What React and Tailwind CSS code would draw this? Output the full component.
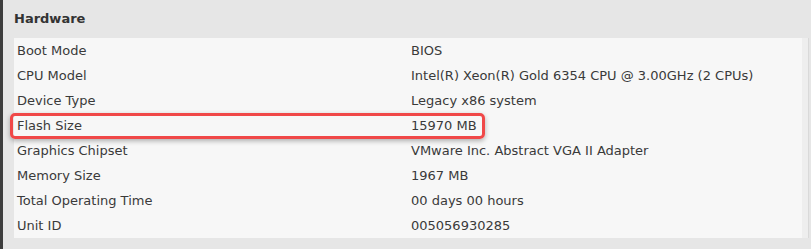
import React from 'react';

const rows = [
  ['Boot Mode', 'BIOS'],
  ['CPU Model', 'Intel(R) Xeon(R) Gold 6354 CPU @ 3.00GHz (2 CPUs)'],
  ['Device Type', 'Legacy x86 system'],
  ['Flash Size', '15970 MB'],
  ['Graphics Chipset', 'VMware Inc. Abstract VGA II Adapter'],
  ['Memory Size', '1967 MB'],
  ['Total Operating Time', '00 days 00 hours'],
  ['Unit ID', '005056930285'],
];

export default function App() {
  return (
    <div
      className="flex w-[811px] h-[249px] bg-[#e6e6e6] text-[13px] text-[#3a3a3a]"
      style={{ fontFamily: '"DejaVu Sans", sans-serif' }}
    >
      <div className="w-[3px] bg-[#3d3d3d]" />
      <div className="flex-1 flex flex-col pl-[11px]">
        <div className="h-[38px] flex items-center font-bold text-[#333]">Hardware</div>
        <div className="flex">
          <div className="relative w-[788px] bg-[#f7f7f7]">
            {rows.map(([label, value]) => (
              <div key={label} className="flex h-[25px] items-center">
                <div className="w-[397px] pl-[3px]">{label}</div>
                <div>{value}</div>
              </div>
            ))}
            <div className="absolute left-[-4px] top-[75px] w-[475px] h-[26px] rounded-[5px] border-[3px] border-[#f04848] shadow-[0_2px_5px_rgba(0,0,0,0.3)]" />
          </div>
          <div className="w-[6px] bg-[#eeeeee]" />
          <div className="w-px bg-[#d9d9d9]" />
        </div>
      </div>
    </div>
  );
}
